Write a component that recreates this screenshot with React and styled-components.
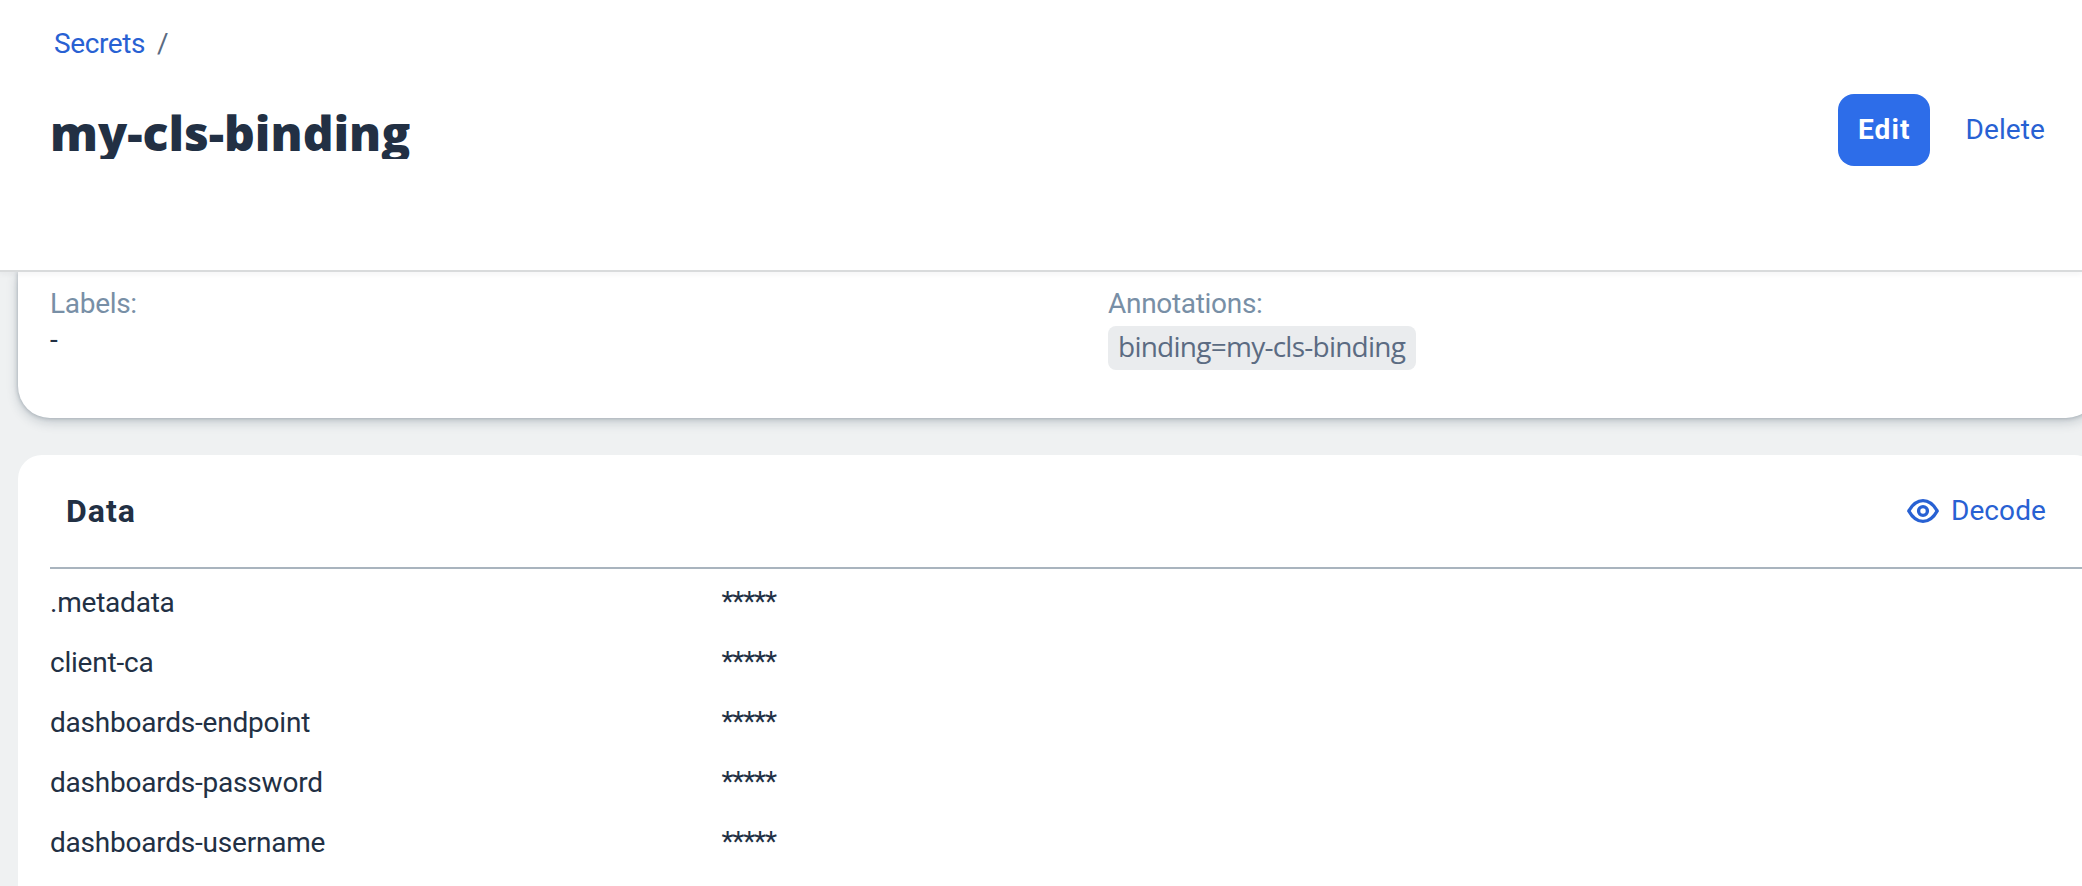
import React from 'react';
import styled, { createGlobalStyle } from 'styled-components';

const GlobalStyle = createGlobalStyle`
  * { box-sizing: border-box; }
  body {
    margin: 0;
    overflow: hidden;
    background: #eff1f2;
    color: #223044;
    font: 430 28px/36px Roboto, "Open Sans", sans-serif;
  }
`;

const Page = styled.main`
  height: 886px;
  overflow: hidden;
  display: flex;
  flex-direction: column;
`;

const Header = styled.header`
  position: relative;
  z-index: 1;
  flex: none;
  height: 272px;
  padding: 26px 37px 0 50px;
  background: #fff;
  border-bottom: 2px solid #d9dbdc;
  box-shadow: 0 2px 6px rgba(34, 48, 68, 0.05);
`;

const Breadcrumb = styled.nav`
  display: flex;
  gap: 12px;
  padding-left: 4px;
  letter-spacing: -0.4px;
  color: #5b6b82;
`;

const Link = styled.a`
  color: #2861d3;
`;

const TitleBar = styled.div`
  display: flex;
  justify-content: space-between;
  align-items: flex-start;
  margin-top: 32px;
`;

const Title = styled.h1`
  margin: 12px 0 0;
  height: 53px;
  overflow: hidden;
  font: 800 48px/54px "Open Sans", sans-serif;
  letter-spacing: 0;
`;

const Actions = styled.div`
  display: flex;
  align-items: center;
  gap: 36px;
`;

const Button = styled.button`
  display: flex;
  align-items: center;
  gap: 12px;
  height: ${(p) => (p.$primary ? '72px' : '40px')};
  padding: ${(p) => (p.$primary ? '0 19px 0 20px' : '0')};
  border: 0;
  border-radius: 16px;
  background: ${(p) => (p.$primary ? '#2d6de9' : 'transparent')};
  color: ${(p) => (p.$primary ? '#fff' : '#2861d3')};
  font: inherit;
  font-weight: ${(p) => (p.$primary ? 700 : 400)};
  letter-spacing: ${(p) => (p.$primary ? '1.1px' : '0.1px')};
`;

const Card = styled.section`
  flex: none;
  width: 2080px;
  margin-left: 18px;
  background: #fff;
`;

const MetaCard = styled(Card)`
  display: grid;
  grid-template-columns: 1058px 1fr;
  height: 146px;
  padding: 14px 32px 0;
  border-radius: 0 0 32px 32px;
  box-shadow: 0 0 4px rgba(34, 53, 72, 0.3), 0 4px 12px rgba(34, 53, 72, 0.22);
`;

const Field = styled.div`
  display: flex;
  flex-direction: column;
  align-items: flex-start;
`;

const Label = styled.span`
  color: #788fa6;
  letter-spacing: -0.3px;
`;

const Tag = styled.span`
  height: 44px;
  margin-top: 4px;
  padding: 0 11px 0 10px;
  border-radius: 8px;
  background: #eaecee;
  color: #5b6b82;
  font: 450 28px/41px "Open Sans", sans-serif;
  letter-spacing: -0.75px;
`;

const DataCard = styled(Card)`
  height: 480px;
  margin-top: 37px;
  padding-left: 32px;
  border-radius: 24px 24px 0 0;
`;

const CardHeader = styled.div`
  display: flex;
  align-items: center;
  justify-content: space-between;
  height: 114px;
  padding: 0 52px 0 16px;
  border-bottom: 2px solid #a9b4be;
`;

const CardTitle = styled.h2`
  margin: 0;
  font-size: 32px;
  line-height: 40px;
  font-weight: 700;
  letter-spacing: 1px;
`;

const Row = styled.div`
  display: grid;
  grid-template-columns: 671.5px 1fr;
  height: 60px;
  padding-top: 16px;
  letter-spacing: -0.22px;
`;

const Mask = styled.span`
  margin-top: -1px;
  letter-spacing: -1.2px;
`;

const EyeIcon = () => (
  <svg width="32" height="26" viewBox="0 0 32 26" fill="none" stroke="currentColor">
    <path
      d="M1.8 13C5.6 6.2 10.4 2.6 16 2.6S26.4 6.2 30.2 13C26.4 19.8 21.6 23.4 16 23.4S5.6 19.8 1.8 13Z"
      strokeWidth="3.4"
      strokeLinejoin="round"
    />
    <circle cx="16" cy="13" r="4.4" strokeWidth="3.4" />
  </svg>
);

const keys = [
  '.metadata',
  'client-ca',
  'dashboards-endpoint',
  'dashboards-password',
  'dashboards-username',
];

export default function App() {
  return (
    <Page>
      <GlobalStyle />
      <Header>
        <Breadcrumb>
          <Link>Secrets</Link>
          <span>/</span>
        </Breadcrumb>
        <TitleBar>
          <Title>my-cls-binding</Title>
          <Actions>
            <Button $primary>Edit</Button>
            <Button>Delete</Button>
          </Actions>
        </TitleBar>
      </Header>
      <MetaCard>
        <Field>
          <Label>Labels:</Label>
          <span>-</span>
        </Field>
        <Field>
          <Label>Annotations:</Label>
          <Tag>binding=my-cls-binding</Tag>
        </Field>
      </MetaCard>
      <DataCard>
        <CardHeader>
          <CardTitle>Data</CardTitle>
          <Button>
            <EyeIcon />
            Decode
          </Button>
        </CardHeader>
        {keys.map((key) => (
          <Row key={key}>
            <span>{key}</span>
            <Mask>*****</Mask>
          </Row>
        ))}
      </DataCard>
    </Page>
  );
}
